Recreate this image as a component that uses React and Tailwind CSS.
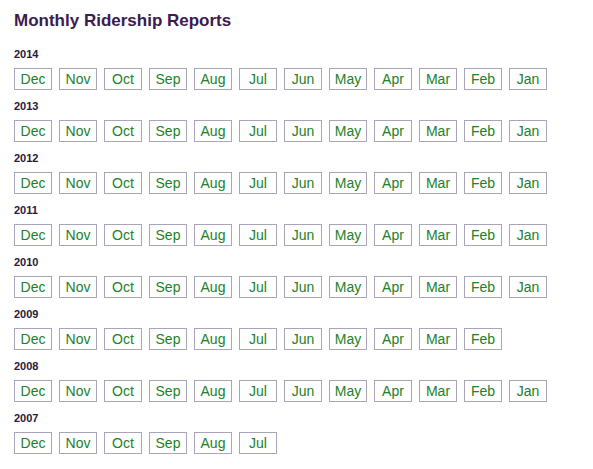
import React from 'react';

const ALL = ['Dec', 'Nov', 'Oct', 'Sep', 'Aug', 'Jul', 'Jun', 'May', 'Apr', 'Mar', 'Feb', 'Jan'];

const years = [
  { year: 2014, months: ALL },
  { year: 2013, months: ALL },
  { year: 2012, months: ALL },
  { year: 2011, months: ALL },
  { year: 2010, months: ALL },
  { year: 2009, months: ALL.slice(0, 11) },
  { year: 2008, months: ALL },
  { year: 2007, months: ALL.slice(0, 6) },
];

const App = () => {
  return (
    <div className="min-h-screen bg-white pl-[14px] pt-[11px] font-['Liberation_Sans',Arial,sans-serif]">
      <h1 className="text-[17px] leading-[20px] font-bold text-[#3c1b4f] mb-[16px]">
        Monthly Ridership Reports
      </h1>

      {years.map((y) => (
        <div key={y.year} className="mb-[9px]">
          <h3 className="text-[11px] leading-[14px] font-bold text-[#2b1838]">{y.year}</h3>
          <div className="flex gap-[7px] mt-[7px]">
            {y.months.map((m) => (
              <a
                key={m}
                href="#"
                className="w-[38px] h-[22px] border border-[#a9a4ba] flex items-center justify-center text-[14px] leading-[20px] text-[#23802a]"
              >
                {m}
              </a>
            ))}
          </div>
        </div>
      ))}
    </div>
  );
};

export default App;
